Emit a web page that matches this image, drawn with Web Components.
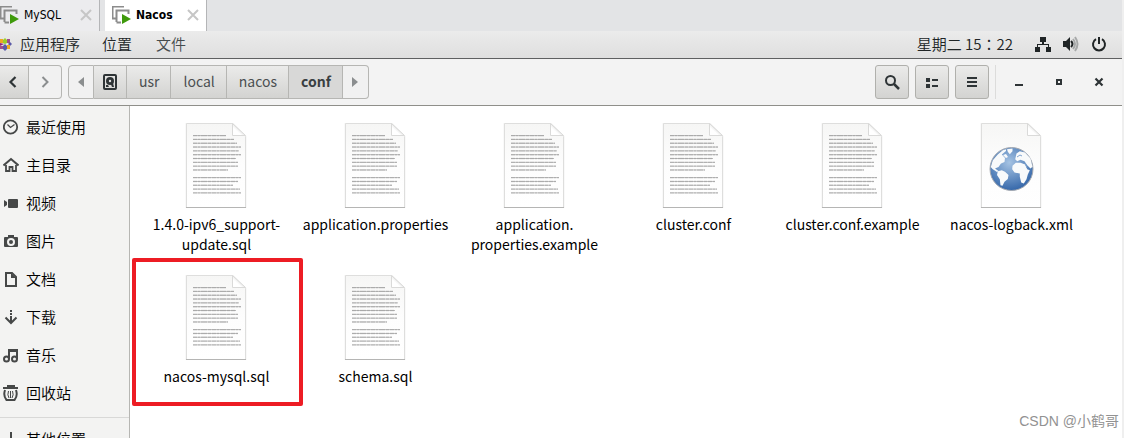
<!DOCTYPE html>
<html lang="zh-CN">
<head>
<meta charset="utf-8">
<title>conf</title>
<style>
  body {
    margin: 0;
    background: #fff;
    color: #000;
    font: 14px/20px "Noto Sans CJK SC", sans-serif;
  }
</style>
</head>
<body>
<remote-desktop></remote-desktop>

<script>
const ICONS = {
  vm: [19, 18, `<path d="M12 .5H.5v12H4M4.5 16V4.500h12V8M4.500 16.500H9" fill="none" stroke="#8c8c8c" stroke-width="2"/><path d="M10 8l9 5-9 5z" fill="#3f9a0c"/>`],
  close: [12, 12, '<path d="M1 1l10 10M11 1L1 11" stroke="#c6c6c6" stroke-width="2"/>'],
  centos: [12, 14, `<path d="M5 1l2 2v3L5 7 3 6V3z" fill="#9ccd2a"/><path d="M0 2h3v4H0z" fill="#efa724"/><path d="M7 2h3v4H7z" fill="#a14f8c"/>
    <path d="M8 7l2-2 2 2-2 2z" fill="#5b5aa8"/><path d="M0 6l4 1-4 2z" fill="#932279"/><path d="M7 8h3v4H7z" fill="#efa724"/>
    <path d="M0 9h3v3H0z" fill="#a14f8c"/><path d="M5 7l2 2v3l-2 2-2-2V9z" fill="#5b5aa8"/>`],
  network: [16, 16, '<path d="M5 1h6v5H9v2h5v3h2v5h-5v-5h2V9H3v2h2v5H0v-5h2V8h5V6H5z"/>'],
  sound: [16, 16, `<path d="M0 5h3l4-4v14l-4-4H0z"/><path d="M8 5q3 3 0 6" fill="none" stroke="currentColor" stroke-width="2"/>
    <path d="M10 3q4 5 0 10M12 1q5 7 0 14" fill="none" stroke="#a7a9a9" stroke-width="2"/>`],
  power: [16, 16, '<path d="M5 3.200a6 6 0 1 0 6 0M8 1v7" fill="none" stroke="currentColor" stroke-width="2"/>'],
  back: [16, 16, '<path d="M9.500 3l-5 5 5 5" fill="none" stroke="currentColor" stroke-width="2.200"/>'],
  forward: [16, 16, '<path d="M5.500 3l5 5-5 5" fill="none" stroke="currentColor" stroke-width="2"/>'],
  left: [6, 10, '<path d="M6 0v10L0 5z"/>'],
  right: [6, 10, '<path d="M0 0v10l6-5z"/>'],
  disk: [14, 16, `<rect x="1" y="1" width="12" height="14" rx="1" fill="none" stroke="currentColor" stroke-width="2"/>
    <circle cx="7" cy="7" r="4"/><path d="M7 8l3 1 1 4H9z"/><circle cx="7" cy="7" r="1.200" fill="#e4e4e3"/><path d="M3 11h2l1 2H3z"/>`],
  search: [16, 16, '<circle cx="6.500" cy="6.500" r="4.500" fill="none" stroke="currentColor" stroke-width="2"/><path d="M10 10l5 5" stroke="currentColor" stroke-width="2.500"/>'],
  list: [14, 12, '<path d="M1 2h4v4H1zM1 8h4v4H1zM7 3h6v2H7zM7 9h6v2H7z"/>'],
  menu: [12, 12, '<path d="M1 1h10v2H1zM1 5h10v2H1zM1 9h10v2H1z"/>'],
  minimize: [10, 10, '<path d="M1 7h8v2H1z"/>'],
  maximize: [6, 6, '<path d="M1 1h4v4H1z" fill="none" stroke="currentColor" stroke-width="2"/>'],
  quit: [10, 10, '<path d="M1.500 1.500l7 7M8.500 1.500l-7 7" stroke="currentColor" stroke-width="2.200"/>'],
  recent: [16, 16, '<circle cx="7.500" cy="8" r="6.700" fill="none" stroke="currentColor" stroke-width="1.800"/><path d="M4.500 5.500L7.500 8.500l4-3" fill="none" stroke="currentColor" stroke-width="1.300"/>'],
  home: [16, 16, '<path d="M.5 8.500L8 2l7.500 6.500" fill="none" stroke="currentColor" stroke-width="2"/><path d="M3 8v6h3.500v-4h3v4H13V8" fill="none" stroke="currentColor" stroke-width="1.800"/>'],
  video: [16, 16, '<rect x="5" y="4" width="10" height="9" rx="1"/><path d="M1 5l3 2v3l-3 2z"/>'],
  photo: [16, 16, '<path fill-rule="evenodd" d="M5 2h6v2h3q1 0 1 1v8q0 1-1 1H2q-1 0-1-1V5q0-1 1-1h3zM8 5a4 4 0 1 0 0 8 4 4 0 1 0 0-8zM8 7a2 2 0 1 1 0 4 2 2 0 1 1 0-4z"/>'],
  document: [16, 16, '<path d="M3 2h6l4 4v9H3z" fill="none" stroke="currentColor" stroke-width="2"/><path d="M8 2v5h5z"/>'],
  download: [16, 16, '<path d="M7 1h2v2H7zM7 4h2v2H7zM7 7h2v6H7z"/><path d="M2.500 8.500L8 14l5.500-5.500" fill="none" stroke="currentColor" stroke-width="2"/>'],
  music: [16, 16, '<path d="M6 12V3h8v9M6 4h8" fill="none" stroke="currentColor" stroke-width="2"/><circle cx="3.500" cy="12" r="2.500" fill="none" stroke="currentColor" stroke-width="2"/><circle cx="11.500" cy="12" r="2.500" fill="none" stroke="currentColor" stroke-width="2"/>'],
  trash: [16, 16, '<path d="M4 0h8v2h3v2H0V2h4z"/><path d="M2 5q-2 6 1.500 10h8Q15 11 13 5" fill="none" stroke="currentColor" stroke-width="2"/><path d="M5.500 6q-1.500 4 .5 7M7.500 6v7M9.500 6q1.500 4-.5 7" fill="none" stroke="currentColor"/>'],
  plus: [16, 16, '<path d="M7 1h2v6h6v2H9v6H7V9H1V7h6z"/>'],
};

class DesktopIcon extends HTMLElement {
  constructor() {
    super();
    this.attachShadow({ mode: 'open' });
  }

  connectedCallback() {
    const [width, height, shape] = ICONS[this.getAttribute('name')];
    this.shadowRoot.innerHTML = /* html */`
    <style>
      :host { display: inline-flex; flex: none; }
      svg { display: block; fill: currentColor; }
    </style>
    <svg width="${width}" height="${height}" viewBox="0 0 ${width} ${height}" aria-hidden="true">${shape}</svg>`;
  }
}

class VmTab extends HTMLElement {
  constructor() {
    super();
    this.attachShadow({ mode: 'open' });
  }

  static get styles() {
    return /* css */`
    :host {
      display: flex;
      align-items: center;
      box-sizing: border-box;
      height: 31px;
      padding: 0 7px 2px;
      border-right: 1px solid #b4b5b7;
      background: #ececee;
      font: 12px/16px "DejaVu Sans Condensed", "DejaVu Sans", sans-serif;
    }
    :host([first]) { padding-left: 0; margin-right: 5px; }
    :host([active]) { background: #fff; font-weight: bold; }
    button {
      display: flex;
      align-items: center;
      padding: 0;
      border: 0;
      background: none;
      font: inherit;
      color: inherit;
    }
    .name { gap: 5px; }
    .close { margin-left: auto; }
  `;
  }

  connectedCallback() {
    this.shadowRoot.innerHTML = /* html */`
    <style>${VmTab.styles}</style>
    <button class="name"><desktop-icon name="vm"></desktop-icon><slot></slot></button>
    <button class="close" aria-label="关闭"><desktop-icon name="close"></desktop-icon></button>`;
  }
}

class VmTabs extends HTMLElement {
  constructor() {
    super();
    this.attachShadow({ mode: 'open' });
  }

  connectedCallback() {
    this.shadowRoot.innerHTML = /* html */`
    <style>
      :host { display: flex; background: #e3e4e6; }
      vm-tab { width: 100px; }
      vm-tab[active] { width: 102px; }
    </style>
    <vm-tab first>MySQL</vm-tab>
    <vm-tab active>Nacos</vm-tab>`;
  }
}

class TopPanel extends HTMLElement {
  constructor() {
    super();
    this.attachShadow({ mode: 'open' });
  }

  static get styles() {
    return /* css */`
    :host {
      display: flex;
      align-items: center;
      height: 25px;
      padding: 0 15px 2px 0;
      border-bottom: 1px solid #5f6061;
      background: linear-gradient(#ebebeb, #dfdfdf);
      color: #202526;
      font-size: 15px;
      font-weight: 350;
    }
    nav, .status { display: flex; align-items: center; }
    nav { gap: 22px; }
    .status { margin-left: auto; gap: 12px; }
    /* the TC face centres the full-width colon */
    time { margin-right: 10px; font-family: "Noto Sans CJK TC", sans-serif; }
    button {
      display: flex;
      align-items: center;
      gap: 8px;
      padding: 0;
      border: 0;
      background: none;
      font: inherit;
      color: inherit;
    }
    .app { color: #454b4d; margin-left: 2px; }
  `;
  }

  connectedCallback() {
    this.shadowRoot.innerHTML = /* html */`
    <style>${TopPanel.styles}</style>
    <nav>
      <button><desktop-icon name="centos"></desktop-icon>应用程序</button>
      <button>位置</button>
      <button class="app">文件</button>
    </nav>
    <div class="status">
      <time lang="zh-TW">星期二 15：22</time>
      <button aria-label="网络"><desktop-icon name="network"></desktop-icon></button>
      <button aria-label="音量"><desktop-icon name="sound"></desktop-icon></button>
      <button aria-label="电源"><desktop-icon name="power"></desktop-icon></button>
    </div>`;
  }
}

class FilesHeader extends HTMLElement {
  constructor() {
    super();
    this.attachShadow({ mode: 'open' });
  }

  static get styles() {
    return /* css */`
    :host {
      display: flex;
      align-items: center;
      gap: 6px;
      height: 46px;
      padding-right: 6px;
      border-bottom: 1px solid #8f8f8a;
      background: #f3f3f3;
      color: #2e3436;
    }
    button {
      display: flex;
      align-items: center;
      justify-content: center;
      box-sizing: border-box;
      height: 34px;
      padding: 0;
      border: 1px solid #b6b6b3;
      background: linear-gradient(#ebebea, #d3d3d1);
      font: inherit;
      color: inherit;
    }
    .group { display: flex; }
    .group button { border-left-width: 0; }
    .group button:last-child { border-radius: 0 4px 4px 0; }
    .path button:first-child { border-left-width: 1px; border-radius: 4px 0 0 4px; }
    .history button { width: 29px; }
    .history button + button { width: 33px; }
    .path button { padding: 0 11px 2px 12px; color: #4a4f51; }
    .path .arrow { width: 26px; padding: 0; }
    .path .disk { width: 33px; padding: 0; color: #2e3436; }
    .group .flat { background: #f1f1f1; color: #8b8e8f; }
    .path .current { background: #d8d8d7; color: #3a3f41; font-weight: bold; }
    .tools { display: flex; gap: 6px; margin-left: auto; }
    .tools button { width: 34px; border-color: #b0b0ac; border-radius: 3px; }
    .window { display: flex; gap: 6px; padding-left: 6px; border-left: 1px solid #dcdcdb; }
    .window button { width: 34px; border: 0; background: none; }
  `;
  }

  connectedCallback() {
    this.shadowRoot.innerHTML = /* html */`
    <style>${FilesHeader.styles}</style>
    <div class="group history">
      <button aria-label="后退"><desktop-icon name="back"></desktop-icon></button>
      <button class="flat" aria-label="前进"><desktop-icon name="forward"></desktop-icon></button>
    </div>
    <div class="group path">
      <button class="arrow flat" aria-label="向左"><desktop-icon name="left"></desktop-icon></button>
      <button class="disk" aria-label="计算机"><desktop-icon name="disk"></desktop-icon></button>
      <button>usr</button>
      <button>local</button>
      <button>nacos</button>
      <button class="current">conf</button>
      <button class="arrow flat" aria-label="向右"><desktop-icon name="right"></desktop-icon></button>
    </div>
    <div class="tools">
      <button aria-label="搜索"><desktop-icon name="search"></desktop-icon></button>
      <button aria-label="列表"><desktop-icon name="list"></desktop-icon></button>
      <button aria-label="菜单"><desktop-icon name="menu"></desktop-icon></button>
    </div>
    <div class="window">
      <button aria-label="最小化"><desktop-icon name="minimize"></desktop-icon></button>
      <button aria-label="最大化"><desktop-icon name="maximize"></desktop-icon></button>
      <button aria-label="关闭"><desktop-icon name="quit"></desktop-icon></button>
    </div>`;
  }
}

class PlacesSidebar extends HTMLElement {
  constructor() {
    super();
    this.attachShadow({ mode: 'open' });
    this.places = [
      ['recent', '最近使用'],
      ['home', '主目录'],
      ['video', '视频'],
      ['photo', '图片'],
      ['document', '文档'],
      ['download', '下载'],
      ['music', '音乐'],
      ['trash', '回收站'],
    ];
  }

  static get styles() {
    return /* css */`
    :host {
      display: block;
      box-sizing: border-box;
      width: 130px;
      padding-top: 2px;
      border-right: 1px solid #b6b6b3;
      background: #f3f3f2;
      font-size: 15px;
      font-weight: 350;
    }
    a {
      display: flex;
      align-items: center;
      gap: 7px;
      height: 38px;
      padding-left: 3px;
      color: #000;
      text-decoration: none;
    }
    desktop-icon { color: #464848; }
    hr { margin: 5px 0 2px; border: 0; border-top: 1px solid #d8d8d7; }
  `;
  }

  preparePlace([icon, label]) {
    return `<a href="#${icon}"><desktop-icon name="${icon}"></desktop-icon>${label}</a>`;
  }

  connectedCallback() {
    this.shadowRoot.innerHTML = /* html */`
    <style>${PlacesSidebar.styles}</style>
    ${this.places.map(this.preparePlace).join('')}
    <hr>
    ${this.preparePlace(['plus', '其他位置'])}`;
  }
}

class FileItem extends HTMLElement {
  constructor() {
    super();
    this.attachShadow({ mode: 'open' });
  }

  static get styles() {
    return /* css */`
    :host { display: block; position: relative; }
    a {
      display: flex;
      flex-direction: column;
      align-items: center;
      gap: 6px;
      padding: 0 12px;
      color: #000;
      text-align: center;
      text-decoration: none;
    }
    svg { display: block; }
    /* hand drawn frame around the tile */
    :host([marked])::after {
      content: "";
      position: absolute;
      inset: -16px -7px -20px -5px;
      border: 4px solid #ed1c24;
      border-radius: 2px;
    }
  `;
  }

  prepareText() {
    const widths = [33, 41, 44, 48, 46, 48, 43, 45, 45, 35, 0, 48, 45, 40, 47, 48];
    return widths.map((width, i) => {
      const y = 13.6 + i * 3.82;
      return width ? `<path d="M9 ${y}h${width}" stroke="#777" stroke-opacity=".5"/>
        <path d="M9 ${y}h${width}" stroke="#777" stroke-width="1.400" stroke-opacity=".25" stroke-dasharray="4 1 2 1 6 1 3 1"/>` : '';
    }).join('');
  }

  prepareGlobe() {
    return `
      <circle cx="32.500" cy="47" r="21.500" fill="url(#sea)" stroke="#a3a8b0" stroke-width="1"/>
      <g fill="#f8fafb">
        <path d="M13.800 38.200L18.800 32.500 23.800 28.200 27.100 27.200 27 29 22.800 32.500 26 36 25.500 40 22 41.500 19.500 45 16 46.500 19.500 49 18 50 13.500 47 11.800 45z"/>
        <path d="M18.800 49.200L22.800 48.200 26 49.800 29.500 53 28.800 57 25.500 59.800 23.500 63.800 21.500 63.200 20.800 57.200 18 53z"/>
        <path d="M28 27.200L33.500 26.500V29.200L30.800 32.200 28.800 29.800zM24 33l3-1 2 3-2 1z"/>
        <path d="M36.200 37.200L37.500 31.500 40.800 29.200 46 30.500 51.500 36.500 53.500 44.800 51.500 46.500 48.200 43.200 45.500 39.200 41.500 37.800 38.200 39.200z"/>
        <path d="M33.500 43.800L36.800 40.800H41.500L46.200 42.500 48.200 47.200 50.800 48.200 48.800 52.500 47.500 57.200 44.800 61.500 42.200 60.500 40.800 54.800V51.500L35.500 50.500 33.200 47.200z"/>
      </g>
      <path d="M38 35l3-2 2 1M46 41l2 5" fill="none" stroke="#7fa3cf"/>`;
  }

  connectedCallback() {
    this.shadowRoot.innerHTML = /* html */`
    <style>${FileItem.styles}</style>
    <a href="#file">
      <svg width="64" height="86" viewBox="1 0 64 86" aria-hidden="true">
        <defs>
          <linearGradient id="paper" x2="0" y2="1"><stop stop-color="#f6f6f5"/><stop offset=".5" stop-color="#fdfdfd"/><stop offset="1" stop-color="#fff"/></linearGradient>
          <linearGradient id="fold" x1="0" y1="1" x2="1" y2="0"><stop stop-color="#fff"/><stop offset=".35" stop-color="#fff"/><stop offset=".55" stop-color="#e6e6e5"/></linearGradient>
          <radialGradient id="sea" cx=".45" cy=".35" r=".65"><stop stop-color="#a5c3e3"/><stop offset="1" stop-color="#3668aa"/></radialGradient>
        </defs>
        <path d="M1.500 1h48l13 13v72h-61z" fill="#000" opacity=".05"/>
        <path d="M2.500 1.500h46l13 13v71h-59z" fill="url(#paper)" stroke="#dededd"/>
        <path d="M2 85.500h60" stroke="#b5b5b4"/>
        <path d="M48.500 1.500v12h13z" fill="url(#fold)" stroke="#dadad9"/>
        ${this.getAttribute('kind') === 'xml' ? this.prepareGlobe() : this.prepareText()}
      </svg>
      <span><slot></slot></span>
    </a>`;
  }
}

class FileGrid extends HTMLElement {
  constructor() {
    super();
    this.attachShadow({ mode: 'open' });
  }

  connectedCallback() {
    this.shadowRoot.innerHTML = /* html */`
    <style>
      :host {
        display: grid;
        grid-template-columns: repeat(auto-fill, 159px);
        align-content: start;
        gap: 20px 0;
        padding: 16px 7px;
        background: #fff;
      }
    </style>
    <file-item>1.4.0-ipv6_support-<wbr>update.sql</file-item>
    <file-item>application.properties</file-item>
    <file-item>application.<wbr>properties.example</file-item>
    <file-item>cluster.conf</file-item>
    <file-item>cluster.conf.example</file-item>
    <file-item kind="xml">nacos-logback.xml</file-item>
    <file-item marked>nacos-mysql.sql</file-item>
    <file-item>schema.sql</file-item>`;
  }
}

class RemoteDesktop extends HTMLElement {
  constructor() {
    super();
    this.attachShadow({ mode: 'open' });
  }

  static get styles() {
    return /* css */`
    :host {
      display: flex;
      flex-direction: column;
      position: relative;
      box-sizing: border-box;
      height: 100vh;
      margin-right: 10px;
      border-right: 2px solid #efefef;
      overflow: hidden;
    }
    main { display: flex; flex: 1; min-height: 0; }
    places-sidebar { flex: none; }
    file-grid { flex: 1; }
    .watermark {
      position: absolute;
      right: 3px;
      bottom: 7px;
      color: #929292;
      font: 14px/20px "Liberation Sans", "Noto Sans CJK SC", sans-serif;
    }
  `;
  }

  connectedCallback() {
    this.shadowRoot.innerHTML = /* html */`
    <style>${RemoteDesktop.styles}</style>
    <vm-tabs></vm-tabs>
    <top-panel></top-panel>
    <files-header></files-header>
    <main>
      <places-sidebar></places-sidebar>
      <file-grid></file-grid>
    </main>
    <div class="watermark">CSDN @小鹤哥</div>`;
  }
}

customElements.define('desktop-icon', DesktopIcon);
customElements.define('vm-tab', VmTab);
customElements.define('vm-tabs', VmTabs);
customElements.define('top-panel', TopPanel);
customElements.define('files-header', FilesHeader);
customElements.define('places-sidebar', PlacesSidebar);
customElements.define('file-item', FileItem);
customElements.define('file-grid', FileGrid);
customElements.define('remote-desktop', RemoteDesktop);
</script>
</body>
</html>
